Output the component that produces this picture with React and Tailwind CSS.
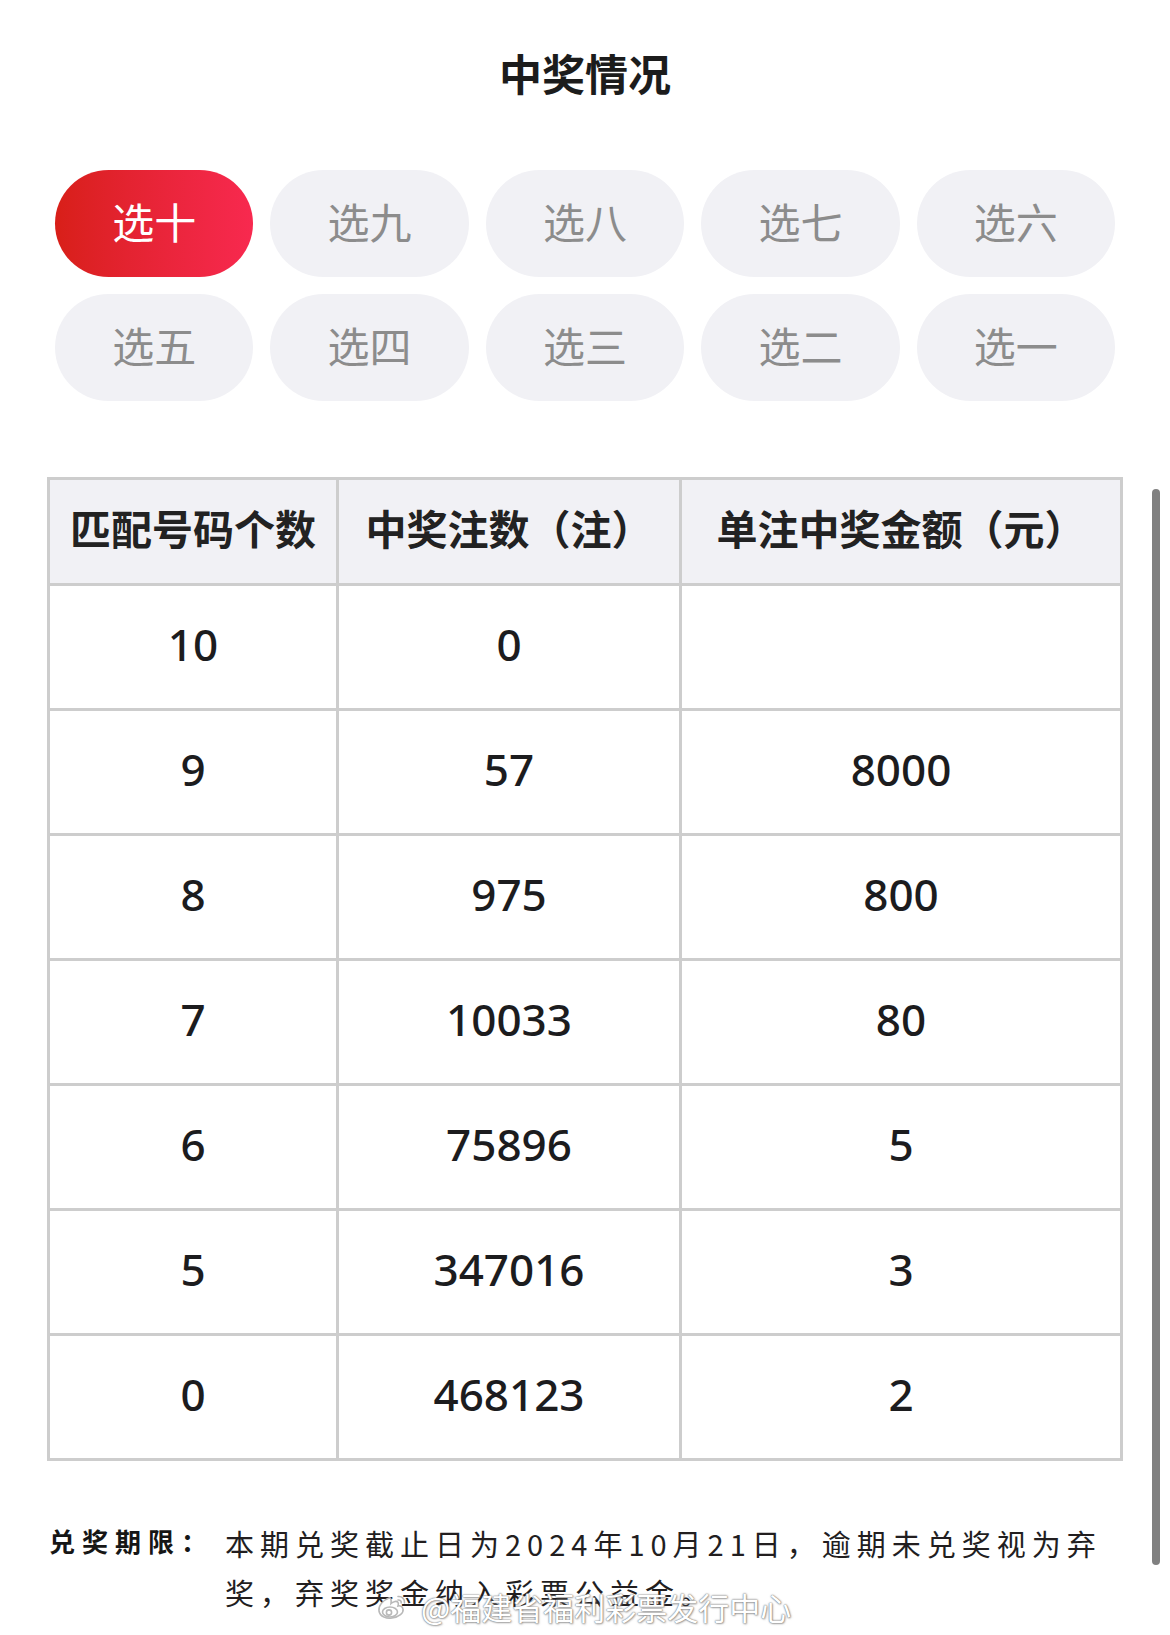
import React from "react";

const cjk = '"Noto Sans CJK SC", "Noto Sans", sans-serif';
const num = '"Noto Sans", "Noto Sans CJK SC", sans-serif';

const tabs = ["选十", "选九", "选八", "选七", "选六", "选五", "选四", "选三", "选二", "选一"];

const rows = [
  ["10", "0", ""],
  ["9", "57", "8000"],
  ["8", "975", "800"],
  ["7", "10033", "80"],
  ["6", "75896", "5"],
  ["5", "347016", "3"],
  ["0", "468123", "2"],
];

function WeiboLogo() {
  return (
    <svg width="30" height="28" viewBox="0 0 30 28" fill="none">
      <g stroke="#b9b9b9" strokeWidth="1.6" fill="#ffffff">
        <path d="M12 5 C6 7 1 13 2 18 C3 24 10 26 15 25 C22 24 27 20 26 16 C25.5 13 22.5 12.5 21 13 C22 10 21 8 18 8.5 C16 9 14.5 10 14 10.5 C14.5 7 14 4.5 12 5 Z" />
        <ellipse cx="13" cy="19" rx="7.5" ry="5" />
        <circle cx="12" cy="19.5" r="2.6" />
      </g>
      <g stroke="#b9b9b9" strokeWidth="1.6" fill="none" strokeLinecap="round">
        <path d="M21 3.5 C25 3 28 6 27.5 10" />
        <path d="M21 7 C23 6.8 24.5 8 24.2 10" />
      </g>
    </svg>
  );
}

export default function App() {
  return (
    <div
      className="relative w-[1170px] h-[1635px] overflow-hidden bg-white"
      style={{ fontFamily: cjk }}
    >
      <div className="h-[144px] flex items-center justify-center">
        <h1 className="text-[43px] leading-none font-bold text-[#1c1c1c]">中奖情况</h1>
      </div>

      <div className="mt-[26px] px-[55px] grid grid-cols-5 gap-x-[17px] gap-y-[17px]">
        {tabs.map((t, i) => (
          <div
            key={t}
            className={
              i === 0
                ? "h-[107px] pb-[6px] rounded-full flex items-center justify-center bg-gradient-to-r from-[#d81f18] to-[#f8294f] text-white text-[42px]"
                : "h-[107px] pb-[6px] rounded-full flex items-center justify-center bg-[#f1f1f5] text-[#8c8c8c] text-[42px]"
            }
          >
            {t}
          </div>
        ))}
      </div>

      <div className="mt-[76px] ml-[47px] w-[1076px] border-t-[3px] border-l-[3px] border-[#cdcdcd] grid grid-cols-[289px_343px_441px]">
        <div className="h-[106px] pb-[8px] bg-[#f1f1f5] border-r-[3px] border-b-[3px] border-[#cdcdcd] flex items-center justify-center text-[41px] font-bold text-[#222]">
          匹配号码个数
        </div>
        <div className="h-[106px] pb-[8px] bg-[#f1f1f5] border-r-[3px] border-b-[3px] border-[#cdcdcd] flex items-center justify-center text-[41px] font-bold text-[#222]">
          中奖注数（注）
        </div>
        <div className="h-[106px] pb-[8px] bg-[#f1f1f5] border-r-[3px] border-b-[3px] border-[#cdcdcd] flex items-center justify-center text-[41px] font-bold text-[#222]">
          单注中奖金额（元）
        </div>
        {rows.map((r, ri) =>
          r.map((c, ci) => (
            <div
              key={ri + "-" + ci}
              className="h-[125px] pb-[6px] border-r-[3px] border-b-[3px] border-[#cdcdcd] flex items-center justify-center text-[44px] font-medium text-[#1c1c1e]"
              style={{ fontFamily: num }}
            >
              {c}
            </div>
          ))
        )}
      </div>

      <div className="mt-[58px] pl-[49px] pr-[46px] flex items-start">
        <div className="shrink-0 w-[176px] text-[26px] leading-[44px] font-bold tracking-[7px] text-[#161616]">
          兑奖期限：
        </div>
        <div className="flex-1 text-[29px] leading-[49px] tracking-[6px] text-[#221e1f]">
          本期兑奖截止日为2024年10月21日，逾期未兑奖视为弃奖，弃奖奖金纳入彩票公益金。
        </div>
      </div>

      <div className="absolute left-[377px] top-[1591px] flex items-center gap-[14px]">
        <WeiboLogo />
        <span
          className="text-[31px] leading-none text-white"
          style={{
            textShadow:
              "0 0 2px rgba(120,120,120,0.9), 0 0 1px rgba(100,100,100,0.9), 1px 1px 2px rgba(140,140,140,0.6)",
          }}
        >
          @福建省福利彩票发行中心
        </span>
      </div>

      <div className="absolute left-[1152px] top-[489px] w-[8px] h-[1076px] rounded-full bg-[#808080]" />
    </div>
  );
}
